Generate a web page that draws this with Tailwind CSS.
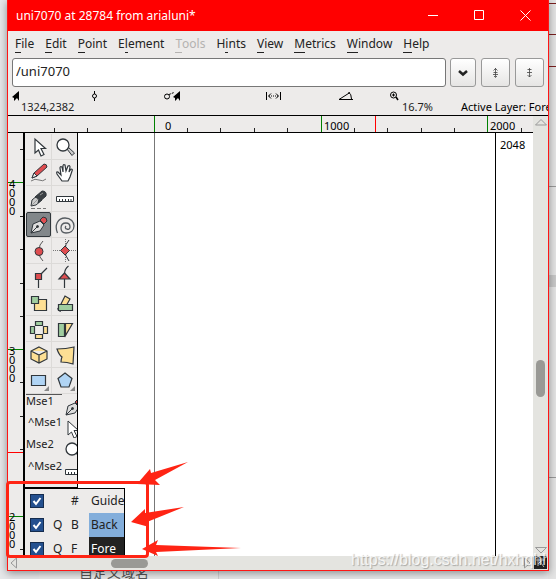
<!doctype html>
<html lang="en">
  <head>
    <meta charset="UTF-8" />
    <meta name="viewport" content="width=device-width, initial-scale=1.0" />
    <title>uni7070 at 28784 from arialuni*</title>
    <script src="https://cdn.jsdelivr.net/npm/@tailwindcss/browser@4"></script>
  </head>

  <body
    class="relative flex h-screen flex-col overflow-hidden bg-[#e6e7e9] px-[7px] font-['Noto_Sans','Noto_Sans_CJK_SC',sans-serif] text-xs text-[#222]"
  >
    <!-- Page behind the window -->
    <div class="absolute inset-y-0 right-0 w-2 bg-[#e4e4e4]">
      <div class="mt-[3px] h-px bg-[#7a2020]"></div>
      <div class="mt-[30px] h-px bg-[#7a2020]"></div>
      <div class="mt-[31px] h-px bg-[#7a2020]"></div>
      <div class="mt-[119px] h-px bg-[#999]"></div>
      <div class="mt-[88px] h-3 bg-[#c8c8c8]"></div>
      <div class="mt-[190px] h-px bg-[#999]"></div>
    </div>
    <div class="absolute bottom-0 left-[39px] h-2 w-[180px] overflow-hidden border-r border-[#d0d0d0] bg-[#e9e9e9]">
      <p class="-mt-2 ml-10 text-sm leading-5 text-[#555]">自定义域名</p>
    </div>

    <main class="relative mb-2 flex min-h-0 flex-1 flex-col border border-t-0 border-[#ff1515] bg-[#edebea] shadow-[0_2px_8px_#0006]">
      <!-- Title bar -->
      <header class="flex h-[31px] shrink-0 items-center justify-between bg-[#ff0000] pl-2 text-white">
        <h1 class="text-xs">uni7070 at 28784 from arialuni*</h1>
        <div class="flex">
          <button aria-label="Minimize" class="grid w-[46px] place-items-center">
            <svg width="11" height="11" fill="none" stroke="currentColor"><path d="M0 5.500h10" /></svg>
          </button>
          <button aria-label="Maximize" class="grid w-[46px] place-items-center">
            <svg width="11" height="11" fill="none" stroke="currentColor"><path d="M.5 .5h9v9h-9z" /></svg>
          </button>
          <button aria-label="Close" class="grid w-[46px] place-items-center">
            <svg width="11" height="11" fill="none" stroke="currentColor"><path d="M.5 .5l10 10M10.500 .5l-10 10" /></svg>
          </button>
        </div>
      </header>

      <!-- Menu -->
      <nav class="flex h-[26px] shrink-0 items-center gap-[11px] pl-[7px] leading-4">
        <a href="#"><span class="inline-block h-[17px] border-b border-current">F</span>ile</a>
        <a href="#"><span class="inline-block h-[17px] border-b border-current">E</span>dit</a>
        <a href="#"><span class="inline-block h-[17px] border-b border-current">P</span>oint</a>
        <a href="#">E<span class="inline-block h-[17px] border-b border-current">l</span>ement</a>
        <a href="#" class="text-[#b4b2b0]"><span class="inline-block h-[17px] border-b border-current">T</span>ools</a>
        <a href="#">H<span class="inline-block h-[17px] border-b border-current">i</span>nts</a>
        <a href="#"><span class="inline-block h-[17px] border-b border-current">V</span>iew</a>
        <a href="#"><span class="inline-block h-[17px] border-b border-current">M</span>etrics</a>
        <a href="#"><span class="inline-block h-[17px] border-b border-current">W</span>indow</a>
        <a href="#"><span class="inline-block h-[17px] border-b border-current">H</span>elp</a>
      </nav>

      <!-- Glyph entry -->
      <div class="flex h-[31px] shrink-0 items-center gap-1 px-1">
        <input
          type="text"
          aria-label="Glyph name"
          value="/uni7070"
          class="h-[29px] min-w-0 flex-1 rounded-[3px] border border-[#777] bg-white px-[3px] pb-1 text-[13px]"
        />
        <button aria-label="Show list" class="grid h-[29px] w-[26px] place-items-center rounded-[3px] border border-[#999] bg-linear-to-b from-white to-[#e6e5e4]">
          <svg width="10" height="8" fill="none" stroke="#222" stroke-width="2.500"><path d="M1 2l4 3.500L9 2" /></svg>
        </button>
        <button aria-label="Previous" class="ml-px grid h-[29px] w-[29px] place-items-center rounded-[3px] border border-[#999] bg-linear-to-b from-white to-[#e6e5e4]">
          <svg width="7" height="10" fill="none" stroke="#444"><path d="M3.500 0v9M1.500 2.500l2-2 2 2M1.500 4.500h4M1 6.500h5M2 8l1.500 1.500L5 8" stroke-width=".8" /></svg>
        </button>
        <button aria-label="Next" class="ml-px grid h-[29px] w-[29px] place-items-center rounded-[3px] border border-[#999] bg-linear-to-b from-white to-[#e6e5e4]">
          <svg width="7" height="10" fill="none" stroke="#444"><path d="M3.500 0v9M1.500 1.500h4M1 4.500h5M1.500 7l2 2 2-2" stroke-width=".8" /></svg>
        </button>
      </div>

      <!-- Status line -->
      <div class="grid h-[28px] shrink-0 grid-cols-[79px_73px_102px_72px_52px_70px_1fr] overflow-hidden border-b border-black pt-[3px] pl-1 text-[11px] leading-3 whitespace-nowrap">
        <div>
          <svg width="8" height="10"><path d="M7 0v10L5 7 2 10V7L0 6z" fill="#000" /></svg>
          <p class="pl-[9px]">1324,2382</p>
        </div>
        <svg width="7" height="10" fill="none" stroke="#000"><path d="M3.500 0v3M3.500 7v3" /><circle cx="3.500" cy="5" r="2" /></svg>
        <svg width="17" height="10" fill="none" stroke="#000"><circle cx="3" cy="5.500" r="2.500" /><path d="M5 3.500l5-2" stroke-dasharray="2 1" /><path d="M16 0v10l-2-3-3 3V7L9 6z" fill="#000" stroke="none" /></svg>
        <svg width="16" height="10" fill="none" stroke="#000"><path d="M.5 1v8M14.500 1v8M5 2.500L2.500 5 5 7.500M10 2.500l2.500 2.500L10 7.500" /><path d="M3 5h9" stroke-dasharray="1 1" /></svg>
        <svg width="16" height="10" fill="none" stroke="#000"><path d="M15 8.500H1L12 1.500M10.500 1q3 2 3 7" /></svg>
        <div>
          <svg width="9" height="10" fill="none" stroke="#000"><circle cx="3.500" cy="4" r="3" /><path d="M2 4h3M3.500 2.500v3" /><path d="M6 6l2 3" stroke-width="1.500" /></svg>
          <p class="pl-3">16.7%</p>
        </div>
        <p class="pt-2.5 pl-px text-black">Active Layer: Fore</p>
      </div>

      <div class="flex min-h-0 flex-1">
        <div class="flex min-w-0 flex-1 flex-col">
          <!-- Horizontal ruler -->
          <svg class="h-[17px] w-full shrink-0 border-b border-black text-[11px]" shape-rendering="crispEdges">
            <path
              stroke="#222"
              d="M46.500 12v5M79.500 12v5M113.500 12v5M179.500 12v5M212.500 12v5M246.500 12v5M279.500 12v5M346.500 12v5M379.500 12v5M413.500 12v5M446.500 12v5M513.500 12v5"
            />
            <path stroke="#008000" d="M146.500 0v17M313.500 0v17M479.500 0v17" />
            <path stroke="#ff0000" d="M367.500 0v17" />
            <text x="157" y="14">0</text>
            <text x="316" y="14">1000</text>
            <text x="482" y="14">2000</text>
          </svg>

          <div class="flex min-h-0 flex-1">
            <!-- Vertical ruler -->
            <svg class="h-full w-[15px] shrink-0 text-[11px]" shape-rendering="crispEdges">
              <path stroke="#222" d="M12 16.500h3M12 83.500h3M12 116.500h3M12 150.500h3M12 183.500h3M12 249.500h3M12 283.500h3M12 316.500h3M12 350.500h3M12 416.500h3" />
              <path stroke="#008000" d="M0 49.500h15M0 216.500h15M0 383.500h15" />
              <path stroke="#ff0000" d="M0 319.500h15" />
              <text>
                <tspan x="1" y="55">4</tspan><tspan x="1" y="64">0</tspan><tspan x="1" y="73">0</tspan><tspan x="1" y="82">0</tspan>
              </text>
              <text>
                <tspan x="1" y="222">3</tspan><tspan x="1" y="231">0</tspan><tspan x="1" y="240">0</tspan><tspan x="1" y="249">0</tspan>
              </text>
              <text>
                <tspan x="1" y="388">2</tspan><tspan x="1" y="397">0</tspan><tspan x="1" y="406">0</tspan><tspan x="1" y="415">0</tspan>
              </text>
            </svg>

            <!-- Drawing canvas -->
            <div class="relative min-w-0 flex-1 overflow-hidden border-l-2 border-black bg-white">
              <svg class="absolute inset-0 h-full w-full text-[11px]" shape-rendering="crispEdges">
                <path d="M129.500 0v900" stroke="#777" />
                <path d="M470.500 0v900" stroke="#000" />
                <text x="475" y="16">2048</text>
              </svg>

              <!-- Toolbox -->
              <section class="relative h-[355px] w-[53px] border-r border-b border-black bg-[#edebea] pt-px pl-px">
                <div class="grid grid-cols-2 gap-px bg-[#dcdad8] *:grid *:h-[25px] *:place-items-center *:bg-[#edebea]">
                  <button aria-label="Pointer">
                    <svg width="24" height="24" fill="none" stroke="#30363b" stroke-width="1.200"><path id="arrow" d="M8 4v14l3.500-3 2.500 6 3-1.500-3-6h4.500z" fill="#fff" /></svg>
                  </button>
                  <button aria-label="Magnify">
                    <svg width="24" height="24" fill="none" stroke="#30363b"><g id="lens"><path d="M14 14l1.500-1.500 6 5.500-2.500 2.500z" fill="#ccc" /><circle cx="10" cy="10" r="6" fill="#fff" stroke-width="1.300" /></g></svg>
                  </button>
                  <button aria-label="Freehand">
                    <svg width="24" height="24" fill="none" stroke="#30363b"><path d="M5 17l2-5 10-9q3 0 3 3l-10 9z" fill="#df4d50" /><path d="M5 17l2-5 3 3z" fill="#eee" /><path d="M4 20q4-3 8-1t7-1" stroke="#777" /></svg>
                  </button>
                  <button aria-label="Scroll by hand">
                    <svg width="24" height="24" fill="none" stroke="#30363b" stroke-width="1.200"><path d="M9 20l-5-7q-1-3 1-2l3 3-1-7q0-2 2-1l1 5V5q0-2 2-1l1 6 2-5q2-1 2 1l-1 5 2-3q2 0 1 2l-2 6-2 4z" fill="#fff" /></svg>
                  </button>
                  <button aria-label="Knife">
                    <svg width="24" height="24" fill="none" stroke="#30363b"><path d="M4 19l1-6 6-5 4 5-6 5z" fill="#ccc" /><path d="M8 10l7-6q5 0 4 5l-8 7 1-4z" fill="#3c4145" /><path d="M13 8l3-2M5 18l6-6" stroke="#999" /><path d="M4 21.500h15" stroke-dasharray="4 2" stroke="#777" /></svg>
                  </button>
                  <button aria-label="Measure">
                    <svg width="24" height="24" fill="none" stroke="#30363b"><path id="rule" d="M3.500 9.500h17v5h-17zM6.500 14v-2M9.500 14v-2M12.500 14v-2M15.500 14v-2M18 14v-2" fill="#fff" /></svg>
                  </button>
                  <button aria-label="Pen" class="rounded-xs border border-[#30363b] bg-[#82878a]!">
                    <svg width="24" height="24" fill="none" stroke="#30363b"><g id="pen"><path d="M4 20l2-9 7-3 4 4-4 6z" fill="#ddd" /><path d="M4 20l6-6" /><circle cx="10.500" cy="13.500" r="1" fill="#333" /><path d="M13 7l3-3q4 0 4 4l-3 3z" fill="#df4d50" /></g></svg>
                  </button>
                  <button aria-label="Spiro">
                    <svg width="24" height="24" fill="none" stroke="#555b60" stroke-width="1.300"><path d="M4.500 20C1 12 5 5 12 5c6 0 9 4 9 8 0 5-4 7-8 7-3 0-5-2-5-5 0-4 3-5 5-5 3 0 4 2 4 4 0 2-2 3-3 2-2 0-2-2-1-3" /></svg>
                  </button>
                  <button aria-label="Curve point">
                    <svg width="24" height="24" fill="none" stroke="#30363b"><path d="M16 2q-4 3-4 10t4 10" stroke="#555" /><circle cx="12" cy="12.500" r="4" fill="#df4d50" /></svg>
                  </button>
                  <button aria-label="HV curve point">
                    <svg width="24" height="24" fill="none" stroke="#30363b"><path d="M0 11.500h24M12.500 0v24" stroke-dasharray="1 1" stroke="#777" /><path d="M16 1q-4 4-4 10t4 11" /><path d="M12 7l4.500 4.500-4.500 4.500-4.500-4.500z" fill="#df4d50" /></svg>
                  </button>
                  <button aria-label="Corner point">
                    <svg width="24" height="24" fill="none" stroke="#30363b" stroke-width="1.200"><path d="M11.500 12v11M12 11l8-8" /><path d="M8.500 8.500h6v6h-6z" fill="#df4d50" /></svg>
                  </button>
                  <button aria-label="Tangent point">
                    <svg width="24" height="24" fill="none" stroke="#30363b" stroke-width="1.200"><path d="M11.500 14v9M11.500 9q0-5 4-8" /><path d="M11.500 8l5.500 6h-11z" fill="#df4d50" /></svg>
                  </button>
                  <button aria-label="Scale">
                    <svg width="24" height="24" fill="none" stroke="#30363b" stroke-width="1.200"><path d="M7.500 8.500h12v11h-12z" fill="#fddf94" /><path d="M4.500 5.500h7v7h-7z" fill="#a0cda0" /></svg>
                  </button>
                  <button aria-label="Rotate">
                    <svg width="24" height="24" fill="none" stroke="#30363b" stroke-width="1.200"><path d="M8 13l4-8 5 3-4 7z" fill="#fddf94" /><path d="M5.500 13.500h14v6h-14z" fill="#a0cda0" /><path d="M5 17q-1 2 4 4" stroke-dasharray="2 1" /></svg>
                  </button>
                  <button aria-label="Flip">
                    <svg width="24" height="24" fill="none" stroke="#30363b" stroke-width="1.200"><path d="M8.500 4.500h7v4h-7zM3.500 9.500h4v7h-4z" fill="#a0cda0" /><path d="M16.500 9.500h4v7h-4zM8.500 17.500h7v4h-7z" fill="#fddf94" /></svg>
                  </button>
                  <button aria-label="Skew">
                    <svg width="24" height="24" fill="none" stroke="#30363b" stroke-width="1.200"><path d="M12.500 6.500h7l-7 12z" fill="#fddf94" /><path d="M5.500 6.500h6v13h-6z" fill="#a0cda0" /></svg>
                  </button>
                  <button aria-label="Rotate in 3D">
                    <svg width="24" height="24" fill="none" stroke="#30363b" stroke-width="1.200"><path d="M12 4l8 4v8l-8 4-8-4V8zM4 8l8 4 8-4M12 12v8" fill="#fddf94" /></svg>
                  </button>
                  <button aria-label="Perspective">
                    <svg width="24" height="24" fill="none" stroke="#30363b" stroke-width="1.200"><path d="M4 6q9 0 17-2l-1 17q-6-2-12-2 0-3 1-5-3-2-5-8z" fill="#fddf94" /></svg>
                  </button>
                  <button aria-label="Rectangle">
                    <svg width="24" height="24" fill="none" stroke="#30363b" stroke-width="1.200"><path d="M4.500 6.500h14v10h-14z" fill="#b0d4f4" /><path d="M22 17v5h-5z" fill="#888" stroke="none" /></svg>
                  </button>
                  <button aria-label="Polygon">
                    <svg width="24" height="24" fill="none" stroke="#30363b" stroke-width="1.200"><path d="M12 4l7 5.500-3 8.500H8L5 9.500z" fill="#b0d4f4" /><path d="M22 17v5h-5z" fill="#888" stroke="none" /></svg>
                  </button>
                </div>

                <!-- Mouse button bindings -->
                <ul class="border-t border-[#dcdad8] text-[11px] leading-3 *:flex *:h-[22px] *:justify-between">
                  <li><span class="h-3 w-9 border-t border-[#555]">Mse1</span><svg class="mt-1 w-3 shrink-0" height="18" viewBox="3 3 12 18" fill="none" stroke="#30363b"><use href="#pen" /></svg></li>
                  <li><span class="pl-0.5">^Mse1</span><svg class="mt-1 w-2.5 shrink-0" height="18" viewBox="7 3 10 18" fill="none" stroke="#30363b"><use href="#arrow" /></svg></li>
                  <li><span>Mse2</span><svg class="mt-1 w-3 shrink-0" height="18" viewBox="3 3 12 18" fill="none" stroke="#30363b"><use href="#lens" /></svg></li>
                  <li><span class="pl-0.5">^Mse2</span><svg class="mt-1 w-3 shrink-0" height="18" viewBox="3 4 12 18" fill="none" stroke="#30363b"><use href="#rule" /></svg></li>
                </ul>
              </section>

              <!-- Layers -->
              <section class="relative w-[100px] border-t border-r border-black bg-[#edebea]">
                <div class="flex h-6 items-center pl-[5px]">
                  <span class="relative mr-[9px] grid">
                    <input type="checkbox" id="guide" checked class="size-3.5 appearance-none border border-[#152c4e] bg-[#24508f]" />
                    <svg class="pointer-events-none absolute inset-0" width="14" height="14" fill="none" stroke="#fff" stroke-width="2"><path d="M3.500 7l2.500 3 4.500-6" /></svg>
                  </span>
                  <label for="guide" class="flex flex-1 items-center self-stretch">
                    <span class="w-[18px]"></span>
                    <span class="w-[18px]">#</span>
                    <span class="flex flex-1 items-center self-stretch pl-0.5">Guide</span>
                  </label>
                </div>
                <div class="flex h-6 items-center pl-[5px]">
                  <span class="relative mr-[9px] grid">
                    <input type="checkbox" id="back" checked class="size-3.5 appearance-none border border-[#152c4e] bg-[#24508f]" />
                    <svg class="pointer-events-none absolute inset-0" width="14" height="14" fill="none" stroke="#fff" stroke-width="2"><path d="M3.500 7l2.500 3 4.500-6" /></svg>
                  </span>
                  <label for="back" class="flex flex-1 items-center self-stretch">
                    <span class="w-[18px]">Q</span>
                    <span class="w-[18px]">B</span>
                    <span class="flex flex-1 items-center self-stretch bg-[#83aedb] pl-0.5">Back</span>
                  </label>
                </div>
                <div class="flex h-6 items-center pl-[5px]">
                  <span class="relative mr-[9px] grid">
                    <input type="checkbox" id="fore" checked class="size-3.5 appearance-none border border-[#152c4e] bg-[#24508f]" />
                    <svg class="pointer-events-none absolute inset-0" width="14" height="14" fill="none" stroke="#fff" stroke-width="2"><path d="M3.500 7l2.500 3 4.500-6" /></svg>
                  </span>
                  <label for="fore" class="flex flex-1 items-center self-stretch">
                    <span class="w-[18px]">Q</span>
                    <span class="w-[18px]">F</span>
                    <span class="flex flex-1 items-center self-stretch bg-[#222] pl-0.5 text-white">Fore</span>
                  </label>
                </div>
              </section>
            </div>
          </div>

          <!-- Horizontal scrollbar -->
          <div class="flex h-3.5 shrink-0 items-center bg-[#e4e4e0] px-0.5">
            <svg width="8" height="12" fill="none" stroke="#999"><path d="M6.500 1v10L1 6z" /></svg>
            <div class="ml-[93px] h-[9px] w-[37px] rounded-full bg-[#999995]"></div>
            <svg class="ml-auto" width="8" height="12" fill="none" stroke="#999"><path d="M1.500 1v10L7 6z" /></svg>
          </div>
        </div>

        <!-- Vertical scrollbar -->
        <div class="flex w-[15px] shrink-0 flex-col items-center bg-[#e4e4e0] pt-0.5">
          <svg width="14" height="8" fill="none" stroke="#999"><path d="M1.500 7h11L7 1.500z" /></svg>
          <div class="mt-[234px] h-[37px] w-[9px] rounded-full bg-[#999995]"></div>
          <svg class="mt-auto" width="14" height="10" fill="none" stroke="#999"><path d="M1.500 1.500h11L7 7z" /></svg>
          <svg width="13" height="14"><path d="M0 0h13v13H0z" fill="#222" /><path d="M2 4h9M4 2v8M8 2l-1 5 3 4M4 8l3-3" fill="none" stroke="#bbb" /></svg>
        </div>
      </div>
    </main>

    <!-- Annotations -->
    <div class="pointer-events-none absolute top-[481px] left-[6px] h-[77px] w-[143px] rounded-sm border-3 border-[#ff2414]"></div>
    <svg class="pointer-events-none absolute top-[455px] left-[120px]" width="130" height="110" fill="#ff2414">
      <path d="M17 29L30 14l1 4 37-11-33 18 5 5z" />
      <path d="M11 67l14-13v4l39-6-37 15 2 5z" />
      <path d="M22 94l16-9-2 5 85 3-85 4 2 4z" />
    </svg>
    <p class="pointer-events-none absolute top-[550px] left-[351px] w-[196px] overflow-hidden font-['Liberation_Sans',sans-serif] text-base leading-5 whitespace-nowrap text-white/80 text-shadow-[1px_1px_1px_#0004]">https://blog.csdn.net/hxhqhh</p>
  </body>
</html>
